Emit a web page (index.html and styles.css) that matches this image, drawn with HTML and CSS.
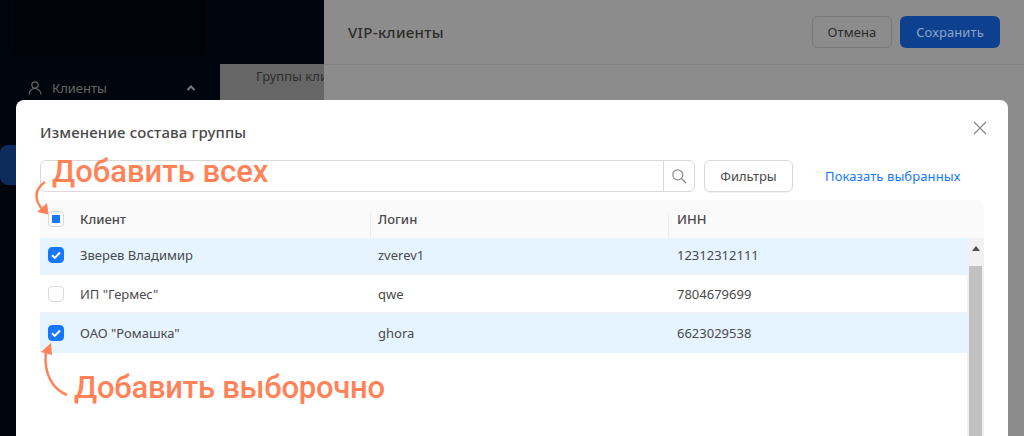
FILE: index.html
```html
<!DOCTYPE html>
<html lang="ru">
<head>
<meta charset="utf-8">
<title>VIP-клиенты</title>
<link rel="stylesheet" href="styles.css">
</head>
<body>
<div class="app">
  <aside class="sidebar">
    <div class="logo-space"><div class="logo-block"></div></div>
    <div class="nav-row">
      <svg class="nav-icon" viewBox="0 0 14 14" width="14" height="14"><circle cx="7" cy="4" r="3.2"/><path d="M1 13.5c0-3.2 2.4-6 6-6s6 2.8 6 6"/></svg>
      <span class="nav-label">Клиенты</span>
      <svg class="nav-chevron" viewBox="0 0 10 6" width="10" height="6"><path d="M1.5 5L5 1.5 8.500 5"/></svg>
    </div>
    <div class="nav-active"></div>
  </aside>
  <div class="middle">
    <div class="middle-top"></div>
    <div class="middle-tab"><span class="tab-text">Группы клиентов</span></div>
  </div>
  <main class="drawer">
    <header class="drawer-head">
      <span class="drawer-title">VIP-клиенты</span>
      <div class="drawer-actions">
        <span class="btn btn-cancel">Отмена</span>
        <span class="btn btn-save">Сохранить</span>
      </div>
    </header>
  </main>
</div>

<section class="modal">
  <h2 class="modal-title">Изменение состава группы</h2>
  <svg class="close" viewBox="0 0 14 14" width="14" height="14"><path d="M1 1l12 12M13 1L1 13"/></svg>
  <div class="toolbar">
    <div class="search">
      <div class="search-input"></div>
      <div class="search-btn">
        <svg viewBox="0 0 16 16" width="16" height="16"><circle cx="6.800" cy="6.800" r="5"/><path d="M10.500 10.500l4.500 4.500"/></svg>
      </div>
    </div>
    <span class="btn-filter">Фильтры</span>
    <span class="show-link">Показать выбранных</span>
  </div>
  <div class="table">
    <div class="row head">
      <div class="cell c1"><span class="check partial"></span></div>
      <div class="cell c2">Клиент</div>
      <div class="cell c3 sep">Логин</div>
      <div class="cell c4 sep">ИНН</div>
    </div>
    <div class="body-wrap">
      <div class="rows">
        <div class="row data selected r1">
          <div class="cell c1"><span class="check on"><svg viewBox="0 0 16 16" width="16" height="16"><path d="M4 8.300l2.800 2.600L12 5.500"/></svg></span></div>
          <div class="cell c2">Зверев Владимир</div>
          <div class="cell c3">zverev1</div>
          <div class="cell c4">12312312111</div>
        </div>
        <div class="row data r2">
          <div class="cell c1"><span class="check"></span></div>
          <div class="cell c2">ИП "Гермес"</div>
          <div class="cell c3">qwe</div>
          <div class="cell c4">7804679699</div>
        </div>
        <div class="row data selected r3">
          <div class="cell c1"><span class="check on"><svg viewBox="0 0 16 16" width="16" height="16"><path d="M4 8.300l2.800 2.600L12 5.500"/></svg></span></div>
          <div class="cell c2">ОАО "Ромашка"</div>
          <div class="cell c3">ghora</div>
          <div class="cell c4">6623029538</div>
        </div>
      </div>
      <div class="scrollbar">
        <div class="scroll-up"><svg viewBox="0 0 8 5" width="8" height="5"><path d="M4 0l4 5H0z"/></svg></div>
        <div class="scroll-thumb"></div>
      </div>
    </div>
  </div>
</section>

<span class="note note-all">Добавить всех</span>
<span class="note note-some">Добавить выборочно</span>
<svg class="arrow arrow-all" viewBox="30 178 24 40" width="24" height="40"><path class="arrow-line" d="M45 182C35 189 33 199 43 210"/><path class="arrow-head" d="M48.500 214.500L37 212l10-9z"/></svg>
<svg class="arrow arrow-some" viewBox="36 340 34 58" width="34" height="58"><path class="arrow-line" d="M67 395C55 390 43 377 46 351"/><path class="arrow-head" d="M51 343L41 352l11 3z"/></svg>
</body>
</html>
```
FILE: styles.css
```css
* { box-sizing: border-box; }
html, body { margin: 0; padding: 0; }
body {
  width: 1024px;
  height: 436px;
  overflow: hidden;
  position: relative;
  font-family: "Noto Sans", "Liberation Sans", sans-serif;
  font-size: 13px;
  color: #4a4a4a;
  background: #8c8c8c;
}
.app { display: flex; height: 436px; }
.sidebar { width: 220px; background: #00060e; color: #6b6b6b; flex: none; }
.logo-space { height: 64px; padding: 0 15px 9px 13px; }
.logo-block { height: 100%; background: #000309; }
.nav-row { display: flex; align-items: center; height: 48px; padding: 0 24px 0 28px; }
.nav-icon { fill: none; stroke: #666; stroke-width: 1.2; margin-right: 10px; }
.nav-label { flex: 1; font-size: 13px; color: #666; }
.nav-chevron { fill: none; stroke: #777; stroke-width: 2; }
.nav-active { margin-top: 33px; width: 100%; height: 40px; background: #0b2c5c; border-radius: 8px 0 0 8px; }
.middle { width: 104px; flex: none; display: flex; flex-direction: column; }
.middle-top { height: 64px; background: #00060e; }
.middle-tab { flex: 1; background: #666; padding: 3px 0 0 36px; overflow: hidden; white-space: nowrap; }
.tab-text { color: #2e2e2e; font-size: 13px; }
.drawer { flex: 1; background: #8c8c8c; }
.drawer-head { height: 65px; display: flex; align-items: center; justify-content: space-between; padding: 0 24px; border-bottom: 1px solid #828282; }
.drawer-title { font-size: 15px; font-weight: 500; letter-spacing: .35px; color: #2c2c2c; }
.drawer-actions { display: flex; gap: 8px; }
.btn { height: 32px; display: flex; align-items: center; justify-content: center; border-radius: 6px; font-size: 13px; letter-spacing: .1px; }
.btn-cancel { width: 80px; border: 1px solid #777; color: #2c2c2c; }
.btn-save { width: 100px; background: #0d418f; color: #8ca4c8; }

.modal {
  position: absolute;
  left: 16px;
  top: 100px;
  width: 992px;
  height: 336px;
  background: #fff;
  border-radius: 8px 8px 0 0;
  padding: 23px 24px 24px;
}
.modal-title { margin: 0; font-size: 15px; font-weight: 500; letter-spacing: .15px; line-height: 19px; color: #4a4a4a; }
.close { position: absolute; top: 21px; right: 21px; fill: none; stroke: #8c8c8c; stroke-width: 1.2; }
.toolbar { display: flex; align-items: center; margin-top: 18px; height: 32px; }
.search { display: flex; width: 655px; height: 32px; border: 1px solid #d9d9d9; border-radius: 6px; }
.search-input { flex: 1; }
.search-btn { width: 31px; border-left: 1px solid #d9d9d9; display: flex; align-items: center; justify-content: center; }
.search-btn svg { fill: none; stroke: #8c8c8c; stroke-width: 1.2; }
.btn-filter { margin-left: 9px; width: 89px; height: 32px; display: flex; align-items: center; justify-content: center; border: 1px solid #d9d9d9; border-radius: 6px; box-shadow: 0 1px 1px rgba(0,0,0,.05); font-size: 13px; color: #4a4a4a; }
.show-link { margin-left: 32px; color: #1777ff; font-size: 13px; letter-spacing: .1px; }
.table { margin-top: 8px; }
.row { display: flex; }
.head { height: 38px; background: #fafafa; border-radius: 8px 8px 0 0; align-items: center; font-weight: 500; color: #4a4a4a; }
.cell { padding: 0 8px; display: flex; align-items: center; }
.c1 { width: 32px; justify-content: center; padding: 0; }
.c2 { width: 298px; }
.c3 { width: 298px; }
.c4 { flex: 1; padding-left: 9px; }
.sep { position: relative; }
.sep::before { content: ""; position: absolute; left: 0; top: 3px; height: 25px; width: 1px; background: #ededed; }
.body-wrap { display: flex; }
.rows { flex: 1; }
.data { align-items: center; border-bottom: 1px solid #f0f0f0; }
.r1 { height: 37px; padding-bottom: 2px; }
.r2 { height: 38px; }
.r3 { height: 40px; border-bottom: 0; }
.selected { background: #e6f4ff; }
.check { width: 16px; height: 16px; border-radius: 4px; border: 1px solid #d9d9d9; background: #fff; display: block; position: relative; }
.check.on { background: #1677ff; border-color: #1677ff; }
.check.on svg { position: absolute; left: -1px; top: -1px; fill: none; stroke: #fff; stroke-width: 2; }
.check.partial::after { content: ""; position: absolute; left: 3px; top: 3px; width: 8px; height: 8px; background: #1677ff; }
.scrollbar { width: 17px; height: 198px; background: #f1f1f1; display: flex; flex-direction: column; align-items: center; }
.scroll-up { height: 28px; width: 100%; display: flex; align-items: center; justify-content: center; }
.scroll-up svg { fill: #505050; margin-top: -8px; }
.scroll-thumb { flex: 1; width: 13px; background: #c1c1c1; }

.note { position: absolute; color: #ff8259; font-family: Roboto, sans-serif; font-weight: 500; line-height: 38px; white-space: nowrap; }
.note-all { left: 52px; top: 153px; font-size: 31px; letter-spacing: 0; }
.note-some { left: 74px; top: 369px; font-size: 31px; letter-spacing: -.25px; }
.arrow { position: absolute; overflow: visible; }
.arrow-all { left: 30px; top: 178px; }
.arrow-some { left: 36px; top: 340px; }
.arrow-line { fill: none; stroke: #ff8259; stroke-width: 2.5; }
.arrow-head { fill: #ff8259; }
```
